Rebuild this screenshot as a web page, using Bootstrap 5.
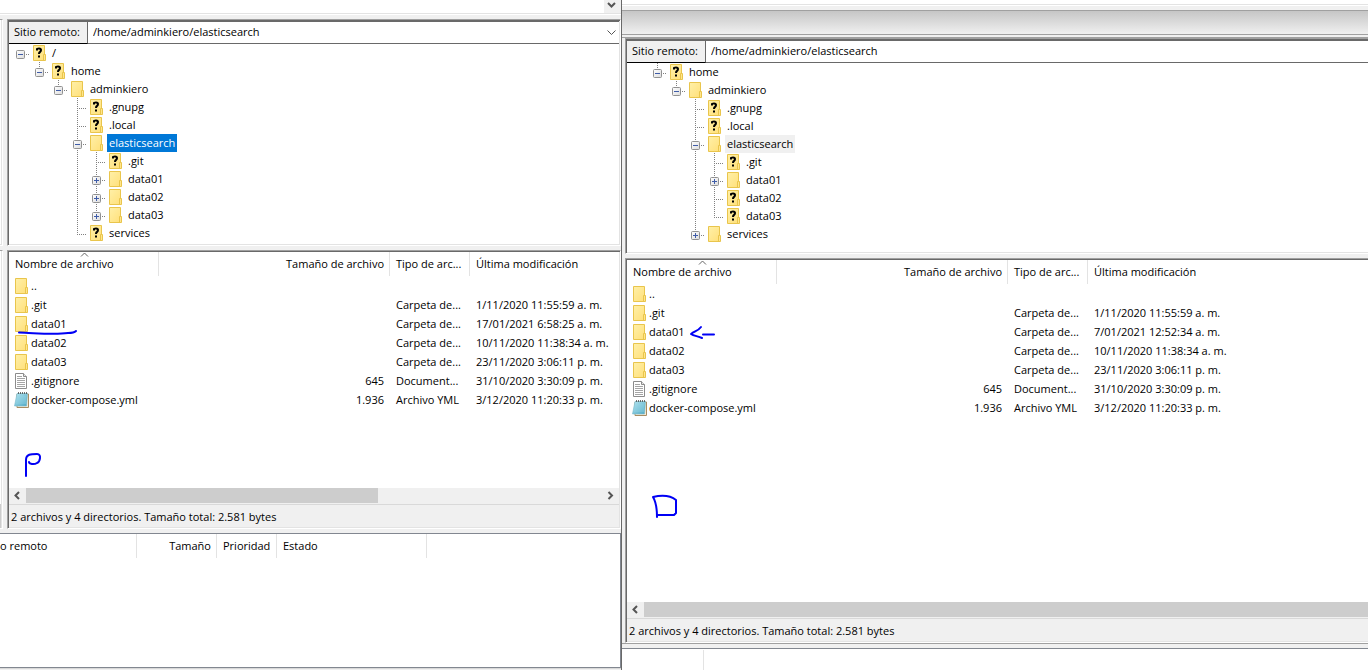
<!DOCTYPE html>
<html lang="es">
<head>
<meta charset="utf-8">
<meta name="viewport" content="width=device-width, initial-scale=1">
<title>Sitio remoto</title>
<link href="https://cdn.jsdelivr.net/npm/bootstrap@5.3.0/dist/css/bootstrap.min.css" rel="stylesheet">
<style>
  body { font-family: "Open Sans", "Noto Sans", sans-serif; font-size: 11px; line-height: 18px; color: #000; background: #f0f0f0; }
  .desk { display: grid; grid-template-columns: 311fr 373fr; grid-template-rows: 100%; height: 100vh; }
  .pane-left { border-right: 1px solid #696969; }

  /* remnants of the panes above */
  .log-strip { height: 14px; border-bottom: 1px solid #e3e3e3; margin-bottom: 5px; box-shadow: 0 1px #fff; }
  .log-strip button { width: 17px; background: #f0f0f0; }
  .log-strip-right { height: 5px; border-bottom: 1px solid #e3e3e3; box-shadow: 0 1px #fff; margin-bottom: 5px; }
  .title-fade { height: 25px; border-top: 1px solid #a0a0a0; border-bottom: 1px solid #a0a0a0; background: linear-gradient(#c6c6c6, #f0f0f0); }
  .fade-edge { height: 3px; border-top: 1px solid #f0f0f0; border-bottom: 1px solid #a0a0a0; }
  .plain-btn { border: 0; padding: 0; background: transparent; line-height: 0; }

  /* sunken panels */
  .sunken { border: 1px solid; border-color: #a0a0a0 #fff #fff #a0a0a0; padding: 1px; background: #fff;
    box-shadow: inset 1px 1px #696969, inset -1px -1px #e3e3e3; min-width: 0; }
  .open-end { margin-left: 3px; border-right: 0; padding-right: 0; box-shadow: inset 1px 1px #696969, inset 0 -1px #e3e3e3; }
  .sliver { flex: none; width: 3px; margin-right: 4px; background: #fff; border: 1px solid; border-width: 1px 1px 1px 0; border-color: #a0a0a0 #fff #fff; box-shadow: inset -1px -1px #e3e3e3; }
  .sliver-status { height: 24px; width: 1px; background: #cdcdcd; }
  .split { height: 4px; }

  .site-bar { height: 23px; border-top: 1px solid #696969; }
  .site-bar label { width: 79px; padding: 0 0 0 5px; line-height: 19px; background: #f0f0f0; border-right: 1px solid #696969; border-bottom: 1px solid #000; white-space: nowrap; }
  .site-bar .path-box { border-bottom: 1px solid #696969; }
  .site-bar select { appearance: none; border: 0; outline: 0; display: block; width: 100%; height: 19px; padding: 0 0 0 5px; background: transparent; color: #000; }
  .site-bar .chev { right: 3px; top: 8px; pointer-events: none; }

  /* folder tree */
  .tree { padding: 0 0 2px 2px; margin: 0; }
  .tree-deep { padding-bottom: 9px; }
  .tree li { height: 18px; }
  .guide { width: 19px; height: 18px; flex: none; position: relative; }
  .guide.down::before, .guide.tee::before, .guide.elbow::before { content: ""; position: absolute; left: 9px; top: 0; width: 1px; height: 18px;
    background: repeating-linear-gradient(#808080 0 1px, transparent 1px 2px); }
  .guide.elbow::before { height: 10px; }
  .guide.tee::after, .guide.elbow::after, .guide.root::after { content: ""; position: absolute; left: 9px; right: 0; top: 10px; height: 1px;
    background: repeating-linear-gradient(90deg, #808080 0 1px, transparent 1px 2px); }
  .guide button { position: absolute; left: 5px; top: 6px; z-index: 1; }
  .tree svg, .files svg { display: block; flex: none; }
  .node-icon { padding-left: 2px; }
  .node-name { margin-left: 2px; padding: 0 2px; }
  .node-name.active { background: #0078d7; color: #fff; }
  .node-name.idle { background: #f0f0f0; }

  /* file lists */
  .files { table-layout: fixed; width: 100%; border-collapse: separate; border-spacing: 0; white-space: nowrap; }
  .files th { font-weight: 400; height: 24px; padding: 0 5px 0 6px; border-right: 1px solid #e3e3e3; overflow: hidden; }
  .files th:last-child { border-right: 0; }
  .files td { height: 19px; padding: 0 6px; overflow: hidden; line-height: 19px; }
  .files td.fname { padding-left: 5px; }
  .fname-row { gap: 1px; }
  .col-name { width: 150px; } .col-size { width: 231px; } .col-type { width: 80px; }
  .sort-mark { left: 72px; top: 1px; }
  .ink { left: 0; top: 0; pointer-events: none; }
  .ink path { fill: none; stroke: #0000f5; stroke-width: 2; stroke-linecap: round; stroke-linejoin: round; }

  .hbar { height: 15px; background: #f0f0f0; }
  .hbar button { width: 17px; height: 15px; }
  .thumb { background: #cdcdcd; flex: 353 0 0; }
  .rest { flex: 224 0 0; }
  .status { height: 24px; background: #f0f0f0; border-top: 1px solid #f0f0f0; box-shadow: inset 0 1px #d9d9d9; padding: 3px 0 0 2px; line-height: 19px; white-space: nowrap; }
  .grow-files { flex: 279 0 0; min-height: 0; }
  .grow-queue { flex: 135 0 0; min-height: 0; }
  .queue { border: 1px solid #828790; border-left: 0; }
  .queue th:first-child { padding-left: 0; }
  .desk-edge { height: 2px; border-top: 1px solid #d9d9d9; }
  .q-name { width: 137px; } .q-size { width: 80px; } .q-prio { width: 60px; } .q-state { width: 150px; }
  .queue-right { height: 22px; border-top: 1px solid #828790; padding-top: 1px; }
  .queue-right div { width: 82px; border-right: 1px solid #e3e3e3; }
  .base-line { height: 5px; border-top: 1px solid #a0a0a0; }
</style>
</head>
<body class="overflow-hidden">

<svg width="0" height="0" class="position-absolute" aria-hidden="true">
  <defs>
    <linearGradient id="gFolder" x1="0" y1="0" x2="1" y2="1"><stop offset="0" stop-color="#fff0a8"/><stop offset="1" stop-color="#ffdf78"/></linearGradient>
    <linearGradient id="gPad" x1="0" y1="0" x2="1" y2="1"><stop offset="0" stop-color="#b5e6f2"/><stop offset="1" stop-color="#4fa9c4"/></linearGradient>
    <linearGradient id="gBox" x1="0" y1="0" x2="1" y2="1"><stop offset="0" stop-color="#fff"/><stop offset="1" stop-color="#dcdcdc"/></linearGradient>
    <symbol id="folder" viewBox="0 0 16 16">
      <path d="M1.500.5h11v10h1v5h-12z" fill="url(#gFolder)" stroke="#e9c54c"/>
      <path d="M11.500 15v-5.500h2V15" fill="#ffe58c" stroke="#e9c54c"/>
    </symbol>
    <symbol id="unknown" viewBox="0 0 16 16">
      <use href="#folder"/>
      <path d="M5 5.500V4Q5 3.500 7 3.500t2 1.500Q9 6 8 7 7 7.500 7 9" fill="none" stroke="#000" stroke-width="2"/>
      <path d="M6 10.500h2v2H6z"/>
    </symbol>
    <symbol id="doc" viewBox="0 0 16 16">
      <path d="M1.500.5h8l3 3v12h-11z" fill="#fff" stroke="#8c8c8c"/>
      <path d="M9.500.5v3h3" fill="#e6e6e6" stroke="#8c8c8c"/>
      <path d="M3 3.500h5M3 5.500h8M3 7.500h8M3 9.500h8M3 11.500h8M3 13.500h8" stroke="#a5a5a5"/>
    </symbol>
    <symbol id="notepad" viewBox="0 0 16 16">
      <path d="M3 2h11.500v13.500H3z" fill="#f5ead6" stroke="#a88c62"/>
      <path d="M3 1.500h10.500L12.500 14H.5z" fill="url(#gPad)" stroke="#79b8ca" stroke-width=".6"/>
      <path d="M4 1h10" stroke="#444" stroke-width="1.600" stroke-dasharray="1 1"/>
      <path d="M3 5h9M3 7h9M2 9h10M2 11h10" stroke="#9bd6e6" stroke-width=".6"/>
    </symbol>
    <symbol id="minus" viewBox="0 0 9 9"><rect x=".5" y=".5" width="8" height="8" rx="1" fill="url(#gBox)" stroke="#919191"/><path d="M2 4.500h5" stroke="#3f5ca8"/></symbol>
    <symbol id="plus" viewBox="0 0 9 9"><use href="#minus"/><path d="M4.500 2v5" stroke="#3f5ca8"/></symbol>
    <symbol id="left" viewBox="0 0 17 15"><path d="M10 4 6.500 7.500 10 11" fill="none" stroke="#555" stroke-width="2"/></symbol>
    <symbol id="right" viewBox="0 0 17 15"><path d="M6.500 4 10 7.500 6.500 11" fill="none" stroke="#555" stroke-width="2"/></symbol>
  </defs>
</svg>

<main class="desk">
  <section class="pane-left d-flex flex-column overflow-hidden" aria-label="Servidor P">
    <div class="log-strip bg-white d-flex justify-content-end flex-shrink-0">
      <button class="plain-btn" aria-label="Bajar"><svg width="17" height="13" viewBox="0 0 17 13"><path d="M4 3l3.500 3.500L11 3" fill="none" stroke="#555" stroke-width="2"/></svg></button>
    </div>
    <div class="d-flex flex-shrink-0">
      <div class="sliver"></div>
      <div class="sunken flex-grow-1">
        <div class="site-bar d-flex">
          <label for="pathP">Sitio remoto:</label>
          <div class="path-box flex-grow-1 position-relative">
            <select id="pathP"><option>/home/adminkiero/elasticsearch</option></select>
            <svg class="chev position-absolute" width="9" height="6" viewBox="0 0 9 6"><path d="M.5.5l4 4 4-4" fill="none" stroke="#555"/></svg>
          </div>
        </div>
        <ul class="tree list-unstyled" id="treeP"></ul>
      </div>
    </div>
    <div class="split flex-shrink-0"></div>
    <div class="grow-files d-flex">
      <div class="sliver d-flex align-items-end"><div class="sliver-status"></div></div>
      <div class="sunken flex-grow-1 d-flex flex-column position-relative">
        <svg class="sort-mark position-absolute" width="9" height="5" viewBox="0 0 9 5"><path d="M1 4.500l3.500-3.500L8 4.500" fill="none" stroke="#666"/></svg>
        <div class="flex-grow-1 overflow-hidden">
          <table class="files">
            <colgroup><col class="col-name"><col class="col-size"><col class="col-type"><col></colgroup>
            <thead><tr><th>Nombre de archivo</th><th class="text-end">Tamaño de archivo</th><th>Tipo de arc...</th><th>Última modificación</th></tr></thead>
            <tbody id="filesP"></tbody>
          </table>
        </div>
        <svg class="ink position-absolute" width="100" height="236" viewBox="0 0 100 236" aria-hidden="true">
          <path d="M11 81.500C28 82 46 84 60 82q6 0 8-2"/>
          <path d="M18 225V209c0-6 5-6 11-6 5 0 3 8 0 9-3 2-8 1-8-1"/>
        </svg>
        <div class="hbar d-flex flex-shrink-0">
          <button class="plain-btn" aria-label="Izquierda"><svg width="17" height="15"><use href="#left"/></svg></button>
          <div class="thumb"></div><div class="rest"></div>
          <button class="plain-btn" aria-label="Derecha"><svg width="17" height="15"><use href="#right"/></svg></button>
        </div>
        <div class="status flex-shrink-0">2 archivos y 4 directorios. Tamaño total: 2.581 bytes</div>
      </div>
    </div>
    <div class="split flex-shrink-0"></div>
    <div class="grow-queue">
      <div class="queue bg-white overflow-hidden h-100">
        <table class="files">
          <colgroup><col class="q-name"><col class="q-size"><col class="q-prio"><col class="q-state"><col></colgroup>
          <thead><tr><th>o remoto</th><th class="text-end">Tamaño</th><th>Prioridad</th><th>Estado</th><th></th></tr></thead>
        </table>
      </div>
    </div>
    <div class="desk-edge flex-shrink-0"></div>
  </section>

  <section class="d-flex flex-column overflow-hidden" aria-label="Servidor D">
    <div class="log-strip-right bg-white flex-shrink-0"></div>
    <div class="title-fade flex-shrink-0"></div>
    <div class="fade-edge flex-shrink-0"></div>
    <div class="sunken open-end flex-shrink-0">
      <div class="site-bar d-flex">
        <label for="pathD">Sitio remoto:</label>
        <div class="path-box flex-grow-1"><select id="pathD"><option>/home/adminkiero/elasticsearch</option></select></div>
      </div>
      <ul class="tree tree-deep list-unstyled" id="treeD"></ul>
    </div>
    <div class="split flex-shrink-0"></div>
    <div class="sunken open-end flex-grow-1 d-flex flex-column position-relative overflow-hidden">
      <svg class="sort-mark position-absolute" width="9" height="5" viewBox="0 0 9 5"><path d="M1 4.500l3.500-3.500L8 4.500" fill="none" stroke="#666"/></svg>
      <div class="flex-grow-1 overflow-hidden">
        <table class="files">
          <colgroup><col class="col-name"><col class="col-size"><col class="col-type"><col></colgroup>
          <thead><tr><th>Nombre de archivo</th><th class="text-end">Tamaño de archivo</th><th>Tipo de arc...</th><th>Última modificación</th></tr></thead>
          <tbody id="filesD"></tbody>
        </table>
      </div>
      <svg class="ink position-absolute" width="100" height="270" viewBox="0 0 100 270" aria-hidden="true">
        <path d="M75 68c-3 4-6 4-10 7 3 2 7 2 11 4M77 75.500h11"/>
        <path d="M31 258c0-8-1-15-4-20 9-2 18-1 23 3v13l-2 2H31"/>
      </svg>
      <div class="hbar d-flex flex-shrink-0">
        <button class="plain-btn" aria-label="Izquierda"><svg width="17" height="15"><use href="#left"/></svg></button>
        <div class="thumb"></div>
      </div>
      <div class="status flex-shrink-0">2 archivos y 4 directorios. Tamaño total: 2.581 bytes</div>
    </div>
    <div class="base-line flex-shrink-0"></div>
    <div class="queue-right bg-white flex-shrink-0 d-flex"><div></div></div>
  </section>
</main>

<script src="https://cdn.jsdelivr.net/npm/bootstrap@5.3.0/dist/js/bootstrap.bundle.min.js"></script>
<script>
  // Guide letters, one per level: "." blank, "|" line, "t" tee, "l" elbow, "r" root
  const guideClass = { '.': '', '|': 'down', 't': 'tee', 'l': 'elbow', 'r': 'root' };
  const icon = (id) => `<svg width="16" height="16" aria-hidden="true"><use href="#${id}"/></svg>`;

  function drawTree(id, nodes) {
    document.getElementById(id).innerHTML = nodes.map(([guides, box, kind, name, state = '']) => {
      const cells = [...guides].map((g, i) => {
        const knob = box && i === guides.length - 1
          ? `<button class="plain-btn" aria-label="${name}"><svg width="9" height="9"><use href="#${box}"/></svg></button>` : '';
        return `<span class="guide ${guideClass[g]}">${knob}</span>`;
      }).join('');
      return `<li class="d-flex align-items-center">${cells}<span class="node-icon">${icon(kind)}</span><span class="node-name ${state}">${name}</span></li>`;
    }).join('');
  }

  function drawFiles(id, rows) {
    document.getElementById(id).innerHTML = rows.map(([kind, name, size, type, date]) =>
      `<tr><td class="fname"><div class="fname-row d-flex align-items-center">${icon(kind)}<span>${name}</span></div></td><td class="text-end">${size}</td><td>${type}</td><td>${date}</td></tr>`).join('');
  }

  drawTree('treeP', [
    ['r', 'minus', 'unknown', '/'],
    ['.l', 'minus', 'unknown', 'home'],
    ['..l', 'minus', 'folder', 'adminkiero'],
    ['...t', '', 'unknown', '.gnupg'],
    ['...t', '', 'unknown', '.local'],
    ['...t', 'minus', 'folder', 'elasticsearch', 'active'],
    ['...|t', '', 'unknown', '.git'],
    ['...|t', 'plus', 'folder', 'data01'],
    ['...|t', 'plus', 'folder', 'data02'],
    ['...|l', 'plus', 'folder', 'data03'],
    ['...l', '', 'unknown', 'services']
  ]);
  drawTree('treeD', [
    ['.l', 'minus', 'unknown', 'home'],
    ['..l', 'minus', 'folder', 'adminkiero'],
    ['...t', '', 'unknown', '.gnupg'],
    ['...t', '', 'unknown', '.local'],
    ['...t', 'minus', 'folder', 'elasticsearch', 'idle'],
    ['...|t', '', 'unknown', '.git'],
    ['...|t', 'plus', 'folder', 'data01'],
    ['...|t', '', 'unknown', 'data02'],
    ['...|l', '', 'unknown', 'data03'],
    ['...l', 'plus', 'folder', 'services']
  ]);

  const listing = (data01Date) => [
    ['folder', '..', '', '', ''],
    ['folder', '.git', '', 'Carpeta de...', '1/11/2020 11:55:59 a. m.'],
    ['folder', 'data01', '', 'Carpeta de...', data01Date],
    ['folder', 'data02', '', 'Carpeta de...', '10/11/2020 11:38:34 a. m.'],
    ['folder', 'data03', '', 'Carpeta de...', '23/11/2020 3:06:11 p. m.'],
    ['doc', '.gitignore', '645', 'Document...', '31/10/2020 3:30:09 p. m.'],
    ['notepad', 'docker-compose.yml', '1.936', 'Archivo YML', '3/12/2020 11:20:33 p. m.']
  ];
  drawFiles('filesP', listing('17/01/2021 6:58:25 a. m.'));
  drawFiles('filesD', listing('7/01/2021 12:52:34 a. m.'));
</script>
</body>
</html>
